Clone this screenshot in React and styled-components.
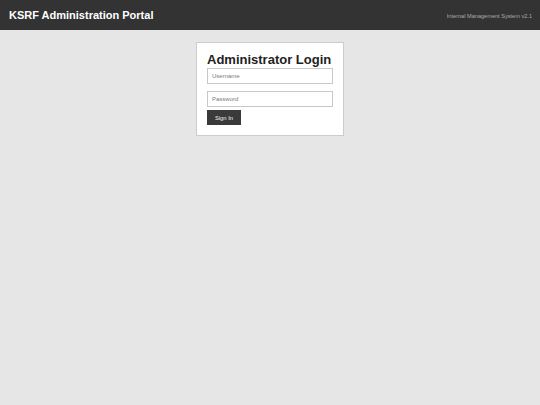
import React, { useState } from "react";
import styled, { createGlobalStyle } from "styled-components";

const GlobalStyle = createGlobalStyle`
  html, body {
    margin: 0;
    padding: 0;
    background: #e6e6e6;
    font-family: "Liberation Sans", Arial, sans-serif;
  }
  #root {
    min-height: 405px;
  }
`;

const Header = styled.header`
  display: flex;
  justify-content: space-between;
  align-items: center;
  height: 30px;
  padding: 0 8px 0 9px;
  background: #333333;
  color: #ffffff;
`;

const Brand = styled.h1`
  margin: 0;
  font-size: 11px;
  font-weight: bold;
`;

const Version = styled.span`
  font-size: 5.6px;
  color: #ababab;
  margin-top: 2px;
`;

const Main = styled.main`
  display: flex;
  justify-content: center;
  padding-top: 12px;
`;

const Card = styled.div`
  width: 126px;
  padding: 9px 10px 10px;
  background: #ffffff;
  border: 1px solid #cccccc;
`;

const Title = styled.h2`
  margin: 0 0 1px;
  font-size: 13px;
  font-weight: bold;
  color: #222222;
  line-height: 15px;
`;

const Form = styled.form`
  display: flex;
  flex-direction: column;
  align-items: flex-start;
`;

const Input = styled.input`
  box-sizing: border-box;
  width: 126px;
  height: 16px;
  margin: 0 0 ${(p) => p.$gap}px;
  padding: 0 4px;
  border: 1px solid #c8c8c8;
  font-family: "Liberation Sans", Arial, sans-serif;
  font-size: 6px;
  color: #333;
  outline: none;

  &::placeholder {
    color: #7a7a7a;
  }
`;

const Button = styled.button`
  box-sizing: border-box;
  width: 34px;
  height: 15px;
  padding: 0;
  border: none;
  background: #3a3a3a;
  color: #f2f2f2;
  font-family: "Liberation Sans", Arial, sans-serif;
  font-size: 5.8px;
  font-weight: normal;
  cursor: pointer;
`;

const App = () => {
  const [username, setUsername] = useState("");
  const [password, setPassword] = useState("");

  const handleSubmit = (e) => {
    e.preventDefault();
  };

  return (
    <>
      <GlobalStyle />
      <Header>
        <Brand>KSRF Administration Portal</Brand>
        <Version>Internal Management System v2.1</Version>
      </Header>
      <Main>
        <Card>
          <Title>Administrator Login</Title>
          <Form onSubmit={handleSubmit}>
            <Input
              $gap={7}
              type="text"
              placeholder="Username"
              value={username}
              onChange={(e) => setUsername(e.target.value)}
            />
            <Input
              $gap={3}
              type="password"
              placeholder="Password"
              value={password}
              onChange={(e) => setPassword(e.target.value)}
            />
            <Button type="submit">Sign In</Button>
          </Form>
        </Card>
      </Main>
    </>
  );
};

export default App;
